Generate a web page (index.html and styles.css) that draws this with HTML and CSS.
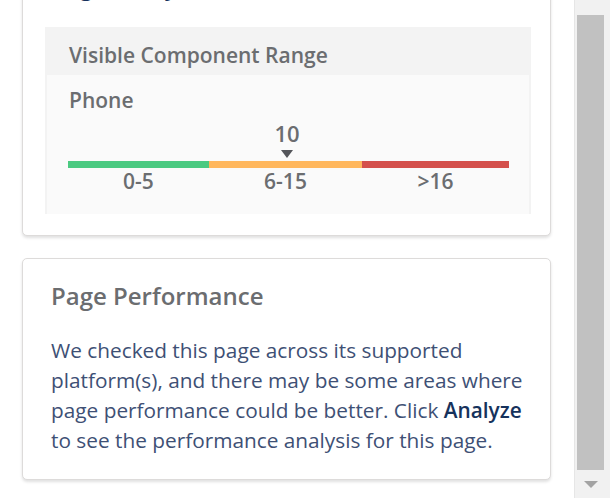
FILE: index.html
```html
<!DOCTYPE html>
<html lang="en">
  <head>
    <meta charset="UTF-8" />
    <meta name="viewport" content="width=device-width, initial-scale=1.0" />
    <title>Page Analysis</title>
    <link rel="stylesheet" href="styles.css">
  </head>
  <body>
    <div class="frame">
      <main class="panel">
        <!-- Complexity card, scrolled partly out of view -->
        <section class="card card-complexity">
          <h2 class="card-title blue">Page Analysis</h2>
          <div class="range-box">
            <div class="range-head">Visible Component Range</div>
            <div class="range-body">
              <div class="device">Phone</div>
              <div class="meter">
                <div class="marker">
                  <span class="marker-value">10</span>
                  <span class="marker-arrow"></span>
                </div>
                <div class="bar">
                  <span class="seg seg-good"></span>
                  <span class="seg seg-warn"></span>
                  <span class="seg seg-bad"></span>
                </div>
                <div class="labels">
                  <span class="seg-good">0-5</span>
                  <span class="seg-warn">6-15</span>
                  <span class="seg-bad">&gt;16</span>
                </div>
              </div>
            </div>
          </div>
        </section>

        <!-- Performance card -->
        <section class="card card-perf">
          <h2 class="card-title">Page Performance</h2>
          <p class="perf-text">We checked this page across its supported platform(s), and there may be some areas where page performance could be better. Click <strong>Analyze</strong> to see the performance analysis for this page.</p>
        </section>
      </main>

      <div class="scrollbar">
        <div class="thumb"></div>
        <div class="arrow-down"></div>
      </div>
    </div>
  </body>
</html>
```

FILE: styles.css
```css
html,
body {
  margin: 0;
  height: 100%;
  overflow: hidden;
}

body {
  background: #fff;
  font-family: "Open Sans", "Noto Sans", sans-serif;
  color: #6b6d70;
}

.frame {
  display: flex;
  height: 498px;
}

.panel {
  flex: 1;
  padding: 0 23px 0 22px;
  margin-top: -43px;
}

.card {
  background: #fff;
  border: 1px solid #dddbda;
  border-radius: 5px;
  box-shadow: 0 2px 3px rgba(0, 0, 0, 0.12);
}

.card-title {
  margin: 0;
  font-size: 24px;
  font-weight: 600;
  line-height: 30px;
  color: #6b6d70;
}

.card-title.blue {
  color: #16325c;
}

/* complexity card */

.card-complexity {
  padding: 13px 19px 21px 22px;
}

.card-complexity .card-title {
  padding-left: 6px;
  margin-bottom: 26px;
}

.range-box {
  background: #f3f3f3;
  padding: 0 2px;
}

.range-head {
  height: 48px;
  box-sizing: border-box;
  padding: 8px 0 0 22px;
  line-height: 40px;
  font-size: 21px;
  font-weight: 600;
  color: #6b6d70;
}

.range-body {
  background: #fafafa;
  height: 139px;
  box-sizing: border-box;
  padding: 13px 20px 0 22px;
}

.device {
  font-size: 21px;
  font-weight: 600;
  line-height: 24px;
}

.meter {
  width: 441px;
  margin-left: -1px;
}

.marker {
  display: flex;
  flex-direction: column;
  align-items: center;
  width: 40px;
  margin: 10px 0 0 199px;
}

.marker-value {
  font-size: 22px;
  font-weight: 600;
  line-height: 22px;
}

.marker-arrow {
  width: 0;
  height: 0;
  margin-top: 6px;
  border-left: 6px solid transparent;
  border-right: 6px solid transparent;
  border-top: 8px solid #54555a;
}

.bar {
  display: flex;
  height: 7px;
  margin-top: 3px;
}

.seg {
  display: block;
}

.bar .seg-good {
  flex: 141;
  background: #4bca81;
}

.bar .seg-warn {
  flex: 153;
  background: #ffb75d;
}

.bar .seg-bad {
  flex: 147;
  background: #d4504c;
}

.labels {
  display: flex;
  font-size: 21px;
  font-weight: 600;
  line-height: 26px;
  text-align: center;
}

.labels .seg-good {
  flex: 141;
}

.labels .seg-warn {
  flex: 153;
}

.labels .seg-bad {
  flex: 147;
}

/* performance card */

.card-perf {
  margin-top: 22px;
  padding: 22px 24px 24px 28px;
}

.perf-text {
  margin: 24px 0 0;
  font-size: 20.8px;
  line-height: 30px;
  color: #3e5075;
}

.perf-text strong {
  font-weight: 600;
  color: #16325c;
}

/* fake scrollbar */

.scrollbar {
  display: flex;
  flex-direction: column;
  align-items: center;
  width: 36px;
  background: #f1f1f1;
  border-left: 1px solid #e6e6e6;
  padding-top: 15px;
  box-sizing: border-box;
}

.thumb {
  width: 27px;
  height: 455px;
  background: #c1c1c1;
  margin-right: 4px;
}

.arrow-down {
  width: 0;
  height: 0;
  margin: 11px 4px 0 0;
  border-left: 7px solid transparent;
  border-right: 7px solid transparent;
  border-top: 7px solid #a3a3a3;
}
```
